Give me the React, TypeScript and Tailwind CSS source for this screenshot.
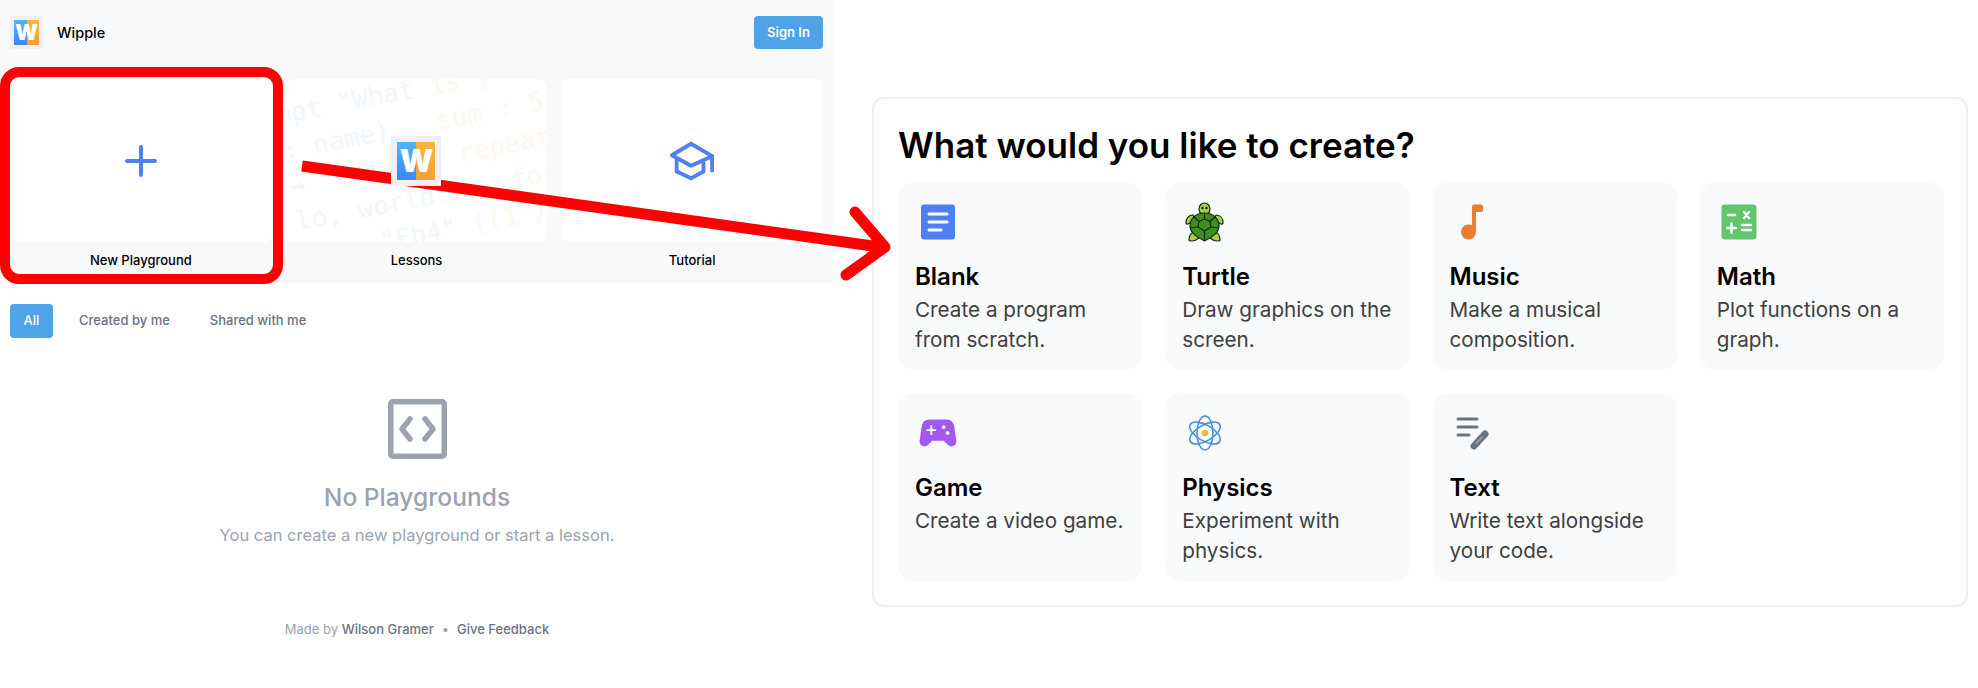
const templates = [
  { title: 'Blank', text: 'Create a program from scratch.', icon: <BlankIcon /> },
  { title: 'Turtle', text: 'Draw graphics on the screen.', icon: <TurtleIcon /> },
  { title: 'Music', text: 'Make a musical composition.', icon: <MusicIcon /> },
  { title: 'Math', text: 'Plot functions on a graph.', icon: <MathIcon /> },
  { title: 'Game', text: 'Create a video game.', icon: <GameIcon /> },
  { title: 'Physics', text: 'Experiment with physics.', icon: <PhysicsIcon /> },
  { title: 'Text', text: 'Write text alongside your code.', icon: <TextIcon /> },
]

function BlankIcon() {
  return (
    <svg className="w-[36px] h-[36px]" viewBox="0 0 36 36">
      <rect x="1" y="0.5" width="34" height="35" rx="3" fill="#4f80f1" />
      <path d="M9 10h18M9 18h18M9 26h12" stroke="#fff" strokeWidth="3" strokeLinecap="round" />
    </svg>
  )
}

function TurtleIcon() {
  return (
    <svg className="w-[40px] h-[40px] shrink-0" viewBox="0 0 40 40" stroke="#1c2414" strokeWidth="1.200" strokeLinejoin="round">
      <ellipse cx="19.5" cy="7" rx="5.5" ry="6" fill="#a5d04b" />
      <path d="M8 13C4 13 1 16 1 21c0 1 1 1.500 2 1 3-1 5-3 7-5z" fill="#a5d04b" />
      <path d="M31 13c4 0 7 3 7 8 0 1-1 1.500-2 1-3-1-5-3-7-5z" fill="#a5d04b" />
      <path d="M9 30c-3 1-5 4-5 8 0 1 1 1 2 1 4 0 7-2 8-4z" fill="#a5d04b" />
      <path d="M30 30c3 1 5 4 5 8 0 1-1 1-2 1-4 0-7-2-8-4z" fill="#a5d04b" />
      <path d="M19.500 11c9 0 14.500 6 14.500 13 0 7-7 11-14.500 15C12 35 5 31 5 24c0-7 5.500-13 14.500-13z" fill="#3d8f1f" />
      <path d="M14 19.500 19.500 17l5.500 2.500 1 5.500-6.500 4-6.500-4z" fill="#3d8f1f" />
      <path d="M19.500 11v6M14 19.500 8.500 14.500M25 19.500l5.500-5M13 25l-8 1M26 25l8 1M19.500 29v10" fill="none" />
      <circle cx="17.500" cy="6" r="0.6" fill="#1c2414" />
      <circle cx="21.500" cy="6" r="0.6" fill="#1c2414" />
    </svg>
  )
}

function MusicIcon() {
  return (
    <svg className="w-[36px] h-[36px]" viewBox="0 0 36 36" fill="#eb7d33">
      <circle cx="14.500" cy="28" r="7.500" />
      <path d="M18 2.500a2 2 0 0 1 2-2h7a2 2 0 0 1 2 2V6a2 2 0 0 1-2 2h-5v20h-4z" />
    </svg>
  )
}

function MathIcon() {
  return (
    <svg className="w-[36px] h-[36px]" viewBox="0 0 36 36">
      <rect x="0.500" y="0.500" width="35" height="35" rx="3" fill="#62c66e" />
      <path
        d="M7 11h7M23 8l5 6M28 8l-5 6M6 24h9M10.500 19.500v9M21 21h9M21 26h9"
        stroke="#fff"
        strokeWidth="2.500"
        strokeLinecap="round"
      />
    </svg>
  )
}

function GameIcon() {
  return (
    <svg className="w-[46px] h-[46px] shrink-0" viewBox="0 0 24 24" fill="#a259f0">
      <path d="M21.580 16.090l-1.090-7.660C20.210 6.460 18.520 5 16.530 5H7.470C5.480 5 3.790 6.460 3.510 8.430l-1.090 7.660C2.200 17.630 3.390 19 4.940 19c.68 0 1.320-.27 1.800-.75L9 16h6l2.250 2.250c.48.48 1.130.75 1.800.75 1.560 0 2.750-1.370 2.530-2.910zM11 11H9v2H8v-2H6v-1h2V8h1v2h2v1zm4-1c-.55 0-1-.45-1-1s.45-1 1-1 1 .45 1 1-.45 1-1 1zm2 3c-.55 0-1-.45-1-1s.45-1 1-1 1 .45 1 1-.45 1-1 1z" />
    </svg>
  )
}

function PhysicsIcon() {
  return (
    <svg className="w-[38px] h-[38px]" viewBox="0 0 38 38" fill="none" stroke="#4a90e2" strokeWidth="1.600">
      <ellipse cx="19" cy="19" rx="8" ry="17" />
      <ellipse cx="19" cy="19" rx="8" ry="17" transform="rotate(60 19 19)" />
      <ellipse cx="19" cy="19" rx="8" ry="17" transform="rotate(-60 19 19)" />
      <circle cx="19" cy="19" r="3.200" fill="#f0b840" stroke="none" />
    </svg>
  )
}

function TextIcon() {
  return (
    <svg className="w-[36px] h-[36px]" viewBox="0 0 36 36" fill="none" stroke="#6b7280" strokeLinecap="round">
      <path d="M4 4h19M4 12h19M4 20h11" strokeWidth="3" />
      <path d="M20 31 31 19" strokeWidth="7" />
      <path d="M22.500 28 28 22" stroke="#a3a8b2" strokeWidth="1.500" />
    </svg>
  )
}

function Logo({ big }: { big?: boolean }) {
  return (
    <div className={big ? 'relative z-10 w-[50px] h-[50px] bg-[#f0f0f4] p-[6px]' : 'w-[33px] h-[33px] bg-[#f0f0f4] p-[4px]'}>
      <div className={big ? 'relative flex h-full text-[31px]' : 'relative flex h-full text-[21px]'}>
        <div className="flex-1 bg-gradient-to-b from-[#54b4f6] to-[#3d85f4]" />
        <div className="flex-1 bg-gradient-to-b from-[#f6b63e] to-[#f3a130]" />
        <span className="absolute inset-0 flex items-center justify-center font-black leading-none text-white">W</span>
      </div>
    </div>
  )
}

function CodeBackground() {
  return (
    <div className="absolute left-[-60px] top-[28px] w-[420px] origin-top-left -rotate-[11deg] whitespace-pre font-['DejaVu_Sans_Mono',monospace] text-[26px] leading-[36px] text-[#f2f7fe]">
      <div>{'prompt "What '}<span className="text-[#fef8ef]">is y</span></div>
      <div>{'   : name)   '}<span className="text-[#fef8ef]">sum : 5</span></div>
      <div>{'   →  cat     '}<span className="text-[#fef8ef]">repeat</span></div>
      <div>{'   lo, world'}<span className="text-[#fef8ef]">!    for</span></div>
      <div>{'     to "Fb4" '}<span className="text-[#fef8ef]">((1 /</span></div>
    </div>
  )
}

export default function App() {
  return (
    <div className="relative flex w-[1978px] h-[688px] overflow-hidden bg-white font-['Inter',sans-serif]">
      <div className="w-[834px] shrink-0">
        <div className="h-[283px] bg-[#f8f9fb] pl-[10px] pr-[11px] pt-[16px]">
          <div className="flex items-center justify-between">
            <div className="flex items-center gap-[14px]">
              <Logo />
              <span className="text-[14.500px] font-medium text-black">Wipple</span>
            </div>
            <button className="w-[69px] h-[33px] rounded-[4px] bg-[#4fa3e8] text-[13px] font-semibold text-white">
              Sign In
            </button>
          </div>
          <div className="grid grid-cols-3 gap-x-[14px] mt-[30px]">
            <div className="flex flex-col items-center">
              <div className="flex items-center justify-center w-full h-[163px] rounded-lg bg-white">
                <svg className="w-[32px] h-[32px]" viewBox="0 0 32 32" stroke="#4f80f1" strokeWidth="4" strokeLinecap="round">
                  <path d="M16 2v28M2 16h28" />
                </svg>
              </div>
              <span className="mt-[10px] text-[13px] leading-[16px] font-medium text-black">New Playground</span>
            </div>
            <div className="flex flex-col items-center">
              <div className="relative flex items-center justify-center w-full h-[163px] overflow-hidden rounded-lg bg-white">
                <CodeBackground />
                <Logo big />
              </div>
              <span className="mt-[10px] text-[13px] leading-[16px] font-medium text-black">Lessons</span>
            </div>
            <div className="flex flex-col items-center">
              <div className="flex items-center justify-center w-full h-[163px] rounded-lg bg-white">
                <svg className="w-[46px] h-[40px]" viewBox="0 0 48 40" fill="none" stroke="#4f80f1" strokeWidth="4" strokeLinejoin="round" strokeLinecap="round">
                  <path d="M23 2 3 14l20 11 22-10z" />
                  <path d="M8 18v13l15 7 13-7v-9M45 15v15" />
                </svg>
              </div>
              <span className="mt-[10px] text-[13px] leading-[16px] font-medium text-black">Tutorial</span>
            </div>
          </div>
        </div>

        <div className="flex items-center gap-[26px] mt-[21px] ml-[10px]">
          <button className="w-[43px] h-[34px] rounded-[4px] bg-[#4fa3e8] text-[13px] font-medium text-white">All</button>
          <span className="text-[13px] font-medium text-[#6b7280]">Created by me</span>
          <span className="ml-[14px] text-[13px] font-medium text-[#6b7280]">Shared with me</span>
        </div>

        <div className="flex flex-col items-center">
          <svg className="w-[59px] h-[60px] mt-[61px]" viewBox="0 0 59 60" fill="none" stroke="#9ca3af" strokeWidth="5.500" strokeLinecap="round" strokeLinejoin="round">
            <rect x="2.750" y="2.750" width="53.500" height="54.500" rx="2" />
            <path d="M22 20 14 30l8 10M37 20l8 10-8 10" />
          </svg>
          <h2 className="mt-[22px] text-[24.600px] leading-[32px] font-medium text-[#9ca3af]">No Playgrounds</h2>
          <p className="mt-[10px] text-[16.500px] leading-[24px] text-[#9ca3af]">You can create a new playground or start a lesson.</p>
          <p className="flex items-center gap-[6px] mt-[72px] text-[13px] leading-[20px] text-[#9ca3af]">
            <span>
              Made by <span className="font-medium text-[#6b7280]">Wilson Gramer</span>
            </span>
            <span className="mx-[2px]">•</span>
            <span className="font-medium text-[#6b7280]">Give Feedback</span>
          </p>
        </div>
      </div>

      <div className="pl-[38px] pt-[97px]">
        <div className="w-[1096px] h-[510px] rounded-xl border-2 border-[#f0f0f3] pl-[24px] pr-[22px] py-[24px]">
          <h1 className="text-[35px] leading-[44px] font-semibold text-black">What would you like to create?</h1>
          <div className="grid grid-cols-4 gap-[23px] mt-[15px]">
            {templates.map((item) => (
              <div key={item.title} className="h-[188px] rounded-2xl bg-[#f9fafb] pl-[17px] pr-[10px] pt-[17px]">
                <div className="flex items-center justify-center w-[45px] h-[45px]">{item.icon}</div>
                <h3 className="mt-[17px] text-[24px] leading-[32px] font-semibold text-black">{item.title}</h3>
                <p className="mt-[2px] text-[20.700px] leading-[29.500px] text-[#404040]">{item.text}</p>
              </div>
            ))}
          </div>
        </div>
      </div>

      {/* red annotation on top of the screenshot */}
      <svg className="absolute inset-0 w-[1978px] h-[688px] pointer-events-none" viewBox="0 0 1978 688" fill="none" stroke="#ff0000">
        <rect x="5" y="72" width="273" height="207" rx="14" strokeWidth="10" />
        <path d="M302 166 880 247" strokeWidth="11" />
        <path d="M855 212 885 247 846 275" strokeWidth="11" strokeLinecap="round" strokeLinejoin="round" />
      </svg>
    </div>
  )
}
